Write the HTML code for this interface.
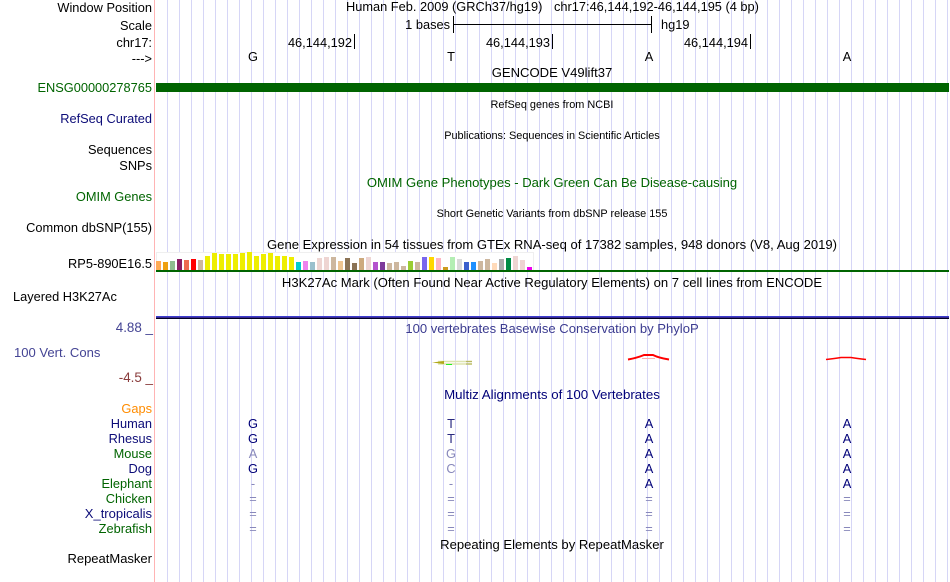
<!DOCTYPE html>
<html><head><meta charset="utf-8"><style>
html,body{margin:0;padding:0;background:#fff;width:950px;height:582px;overflow:hidden}
svg{display:block}
text{font-family:"Liberation Sans",sans-serif;font-size:12.8px;fill:#000}
.r{text-anchor:end}
.m{text-anchor:middle}
.s{font-size:10.9px}
.t{font-size:13.07px}
.g{fill:#006400}.b{fill:#0c0c78}.c{fill:#444494}
.d{fill:#000078}.f{fill:#8888bb}
</style></head><body>
<svg width="950" height="582" viewBox="0 0 950 582" xmlns="http://www.w3.org/2000/svg" shape-rendering="crispEdges">
<path id="grid" d="M167 0V582M179 0V582M191 0V582M203 0V582M215 0V582M227 0V582M239 0V582M251 0V582M263 0V582M275 0V582M287 0V582M299 0V582M311 0V582M323 0V582M335 0V582M347 0V582M359 0V582M371 0V582M383 0V582M395 0V582M407 0V582M419 0V582M431 0V582M443 0V582M455 0V582M467 0V582M479 0V582M491 0V582M503 0V582M515 0V582M527 0V582M539 0V582M551 0V582M563 0V582M575 0V582M587 0V582M599 0V582M611 0V582M623 0V582M635 0V582M647 0V582M659 0V582M671 0V582M683 0V582M695 0V582M707 0V582M719 0V582M731 0V582M743 0V582M755 0V582M767 0V582M779 0V582M791 0V582M803 0V582M815 0V582M827 0V582M839 0V582M851 0V582M863 0V582M875 0V582M887 0V582M899 0V582M911 0V582M923 0V582M935 0V582M947 0V582" stroke="#d6d6f6" stroke-width="1" transform="translate(.5 0)"/>
<rect x="154" y="0" width="1" height="582" fill="#ffb4b4"/>

<!-- labels -->
<text class="r" x="152" y="12">Window Position</text>
<text class="r" x="152" y="30">Scale</text>
<text class="r" x="152" y="47">chr17:</text>
<text class="r" x="152" y="63">---&gt;</text>
<text class="r g" x="152" y="92">ENSG00000278765</text>
<text class="r b" x="152" y="123">RefSeq Curated</text>
<text class="r" x="152" y="154">Sequences</text>
<text class="r" x="152" y="170">SNPs</text>
<text class="r g" x="152" y="201">OMIM Genes</text>
<text class="r" x="152" y="232">Common dbSNP(155)</text>
<text class="r" x="152" y="268">RP5-890E16.5</text>
<text x="13" y="301">Layered H3K27Ac</text>
<text class="r c" x="153" y="332" style="font-size:13.4px">4.88 _</text>
<text class="c t" x="14" y="357">100 Vert. Cons</text>
<text class="r" x="153" y="382" style="fill:#8a3c3c;font-size:13.4px">-4.5 _</text>
<text class="r" x="152" y="413" style="fill:#ff8c00">Gaps</text>
<text class="r b" x="152" y="428">Human</text>
<text class="r b" x="152" y="443">Rhesus</text>
<text class="r g" x="152" y="458">Mouse</text>
<text class="r b" x="152" y="473">Dog</text>
<text class="r g" x="152" y="488">Elephant</text>
<text class="r g" x="152" y="503">Chicken</text>
<text class="r b" x="152" y="518" style="font-size:13px">X_tropicalis</text>
<text class="r g" x="152" y="533">Zebrafish</text>
<text class="r" x="152" y="563" style="font-size:13px">RepeatMasker</text>

<!-- header -->
<text x="346" y="11">Human Feb. 2009 (GRCh37/hg19)</text>
<text x="554" y="11">chr17:46,144,192-46,144,195 (4 bp)</text>
<text class="r" x="450" y="29">1 bases</text>
<rect x="453" y="16" width="1" height="17" fill="#000"/>
<rect x="651" y="16" width="1" height="17" fill="#000"/>
<rect x="453" y="24" width="198" height="1" fill="#000"/>
<text x="661" y="29">hg19</text>
<text class="r" x="352" y="47">46,144,192</text><rect x="354" y="34" width="1" height="15" fill="#000"/>
<text class="r" x="550" y="47">46,144,193</text><rect x="552" y="34" width="1" height="15" fill="#000"/>
<text class="r" x="748" y="47">46,144,194</text><rect x="750" y="34" width="1" height="15" fill="#000"/>
<text class="m" x="253" y="61">G</text><text class="m" x="451" y="61">T</text><text class="m" x="649" y="61">A</text><text class="m" x="847" y="61">A</text>

<text class="m t" x="552" y="77">GENCODE V49lift37</text>
<rect x="156" y="83" width="793" height="9" fill="#006400"/>
<text class="m s" x="552" y="108">RefSeq genes from NCBI</text>
<text class="m s" x="552" y="139">Publications: Sequences in Scientific Articles</text>
<text class="m t" x="552" y="187" style="fill:#006400">OMIM Gene Phenotypes - Dark Green Can Be Disease-causing</text>
<text class="m s" x="552" y="217">Short Genetic Variants from dbSNP release 155</text>
<text class="m t" x="552" y="249">Gene Expression in 54 tissues from GTEx RNA-seq of 17382 samples, 948 donors (V8, Aug 2019)</text>

<!-- GTEx -->
<rect x="156.5" y="252.5" width="377" height="18" fill="#fff" stroke="#efefef"/>
<g>
<rect x="156" y="261" width="5" height="9" fill="#ffaa55"/>
<rect x="163" y="262" width="5" height="8" fill="#eea011"/>
<rect x="170" y="261" width="5" height="9" fill="#8fbc8f"/>
<rect x="177" y="259" width="5" height="11" fill="#8b1c62"/>
<rect x="184" y="260" width="5" height="10" fill="#ee6a50"/>
<rect x="191" y="259" width="5" height="11" fill="#ff0000"/>
<rect x="198" y="260" width="5" height="10" fill="#cdb79e"/>
<rect x="205" y="256" width="5" height="14" fill="#eeee00"/>
<rect x="212" y="253" width="5" height="17" fill="#eeee00"/>
<rect x="219" y="254" width="5" height="16" fill="#eeee00"/>
<rect x="226" y="254" width="5" height="16" fill="#eeee00"/>
<rect x="233" y="254" width="5" height="16" fill="#eeee00"/>
<rect x="240" y="253" width="5" height="17" fill="#eeee00"/>
<rect x="247" y="252" width="5" height="18" fill="#eeee00"/>
<rect x="254" y="256" width="5" height="14" fill="#eeee00"/>
<rect x="261" y="254" width="5" height="16" fill="#eeee00"/>
<rect x="268" y="253" width="5" height="17" fill="#eeee00"/>
<rect x="275" y="256" width="5" height="14" fill="#eeee00"/>
<rect x="282" y="256" width="5" height="14" fill="#eeee00"/>
<rect x="289" y="257" width="5" height="13" fill="#eeee00"/>
<rect x="296" y="262" width="5" height="8" fill="#00cdcd"/>
<rect x="303" y="261" width="5" height="9" fill="#ee82ee"/>
<rect x="310" y="262" width="5" height="8" fill="#9ac0cd"/>
<rect x="317" y="258" width="5" height="12" fill="#eed5d2"/>
<rect x="324" y="257" width="5" height="13" fill="#eed5d2"/>
<rect x="331" y="257" width="5" height="13" fill="#cdb79e"/>
<rect x="338" y="261" width="5" height="9" fill="#eec591"/>
<rect x="345" y="258" width="5" height="12" fill="#8b7355"/>
<rect x="352" y="263" width="5" height="7" fill="#8b7355"/>
<rect x="359" y="258" width="5" height="12" fill="#cdaa7d"/>
<rect x="366" y="257" width="5" height="13" fill="#eed5d2"/>
<rect x="373" y="262" width="5" height="8" fill="#b452cd"/>
<rect x="380" y="262" width="5" height="8" fill="#7d3a9b"/>
<rect x="387" y="263" width="5" height="7" fill="#cdb79e"/>
<rect x="394" y="262" width="5" height="8" fill="#cdb79e"/>
<rect x="401" y="266" width="5" height="4" fill="#cdb79e"/>
<rect x="408" y="261" width="5" height="9" fill="#9acd32"/>
<rect x="415" y="262" width="5" height="8" fill="#cdb79e"/>
<rect x="422" y="257" width="5" height="13" fill="#7a67ee"/>
<rect x="429" y="257" width="5" height="13" fill="#ffd700"/>
<rect x="436" y="258" width="5" height="12" fill="#ffb6c1"/>
<rect x="443" y="267" width="5" height="3" fill="#cd9b1d"/>
<rect x="450" y="257" width="5" height="13" fill="#b4eeb4"/>
<rect x="457" y="259" width="5" height="11" fill="#d9d9d9"/>
<rect x="464" y="262" width="5" height="8" fill="#3a5fcd"/>
<rect x="471" y="262" width="5" height="8" fill="#1e90ff"/>
<rect x="478" y="261" width="5" height="9" fill="#cdb79e"/>
<rect x="485" y="259" width="5" height="11" fill="#cdb79e"/>
<rect x="492" y="263" width="5" height="7" fill="#ffdab9"/>
<rect x="499" y="259" width="5" height="11" fill="#aaaaaa"/>
<rect x="506" y="258" width="5" height="12" fill="#008b45"/>
<rect x="513" y="256" width="5" height="14" fill="#eed5d2"/>
<rect x="520" y="260" width="5" height="10" fill="#eed5d2"/>
<rect x="527" y="267" width="5" height="3" fill="#ee00ee"/>
</g>
<rect x="156" y="270" width="793" height="2" fill="#006400"/>

<text class="m t" x="552" y="287">H3K27Ac Mark (Often Found Near Active Regulatory Elements) on 7 cell lines from ENCODE</text>
<rect x="156" y="316" width="793" height="1" fill="#3c3cd0"/>
<rect x="156" y="317" width="793" height="1" fill="#3a2a90"/>
<rect x="156" y="318" width="793" height="1" fill="#000028"/>

<text class="m t" x="552" y="333" style="fill:#3c3c90">100 vertebrates Basewise Conservation by PhyloP</text>

<!-- wiggles -->
<g shape-rendering="geometricPrecision" fill="none">
<path d="M628 359.5Q637 358 644 355H653Q659 358 669 359.5" stroke="#ff0000" stroke-width="2"/>
<path d="M642 358.5H655" stroke="#ffb0b0" stroke-width="1"/>
<path d="M826 359.5Q835 358.5 841 357.5H851Q857 358.5 866 359.5" stroke="#ff0000" stroke-width="1.4"/>
<path d="M438 361.5H472M438 364H472" stroke="#dde4b0" stroke-width="1.4"/>
<path d="M432 362.5L444 361V364Z" fill="#b0a818" stroke="none"/>
<path d="M466 361.5H472M466 364H472" stroke="#b8b860" stroke-width="1.2"/>
</g>
<rect x="446" y="364" width="6" height="1" fill="#22ee22"/>

<text class="m" x="552" y="399" style="fill:#000078;font-size:13.3px">Multiz Alignments of 100 Vertebrates</text>

<!-- bases -->
<g class="m">
<text class="m d" x="253" y="428">G</text><text class="m d" x="451" y="428" style="fill:#2a2a80">T</text><text class="m d" x="649" y="428">A</text><text class="m d" x="847" y="428">A</text>
<text class="m d" x="253" y="443">G</text><text class="m d" x="451" y="443" style="fill:#2a2a80">T</text><text class="m d" x="649" y="443">A</text><text class="m d" x="847" y="443">A</text>
<text class="m f" x="253" y="458">A</text><text class="m f" x="451" y="458">G</text><text class="m d" x="649" y="458">A</text><text class="m d" x="847" y="458">A</text>
<text class="m d" x="253" y="473">G</text><text class="m f" x="451" y="473">C</text><text class="m d" x="649" y="473">A</text><text class="m d" x="847" y="473">A</text>
<text class="m f" x="253" y="488">-</text><text class="m f" x="451" y="488">-</text><text class="m d" x="649" y="488">A</text><text class="m d" x="847" y="488">A</text>
<text class="m f" x="253" y="503">=</text><text class="m f" x="451" y="503">=</text><text class="m f" x="649" y="503">=</text><text class="m f" x="847" y="503">=</text>
<text class="m f" x="253" y="518">=</text><text class="m f" x="451" y="518">=</text><text class="m f" x="649" y="518">=</text><text class="m f" x="847" y="518">=</text>
<text class="m f" x="253" y="533">=</text><text class="m f" x="451" y="533">=</text><text class="m f" x="649" y="533">=</text><text class="m f" x="847" y="533">=</text>
</g>
<text class="m t" x="552" y="549">Repeating Elements by RepeatMasker</text>
</svg>
</body></html>
